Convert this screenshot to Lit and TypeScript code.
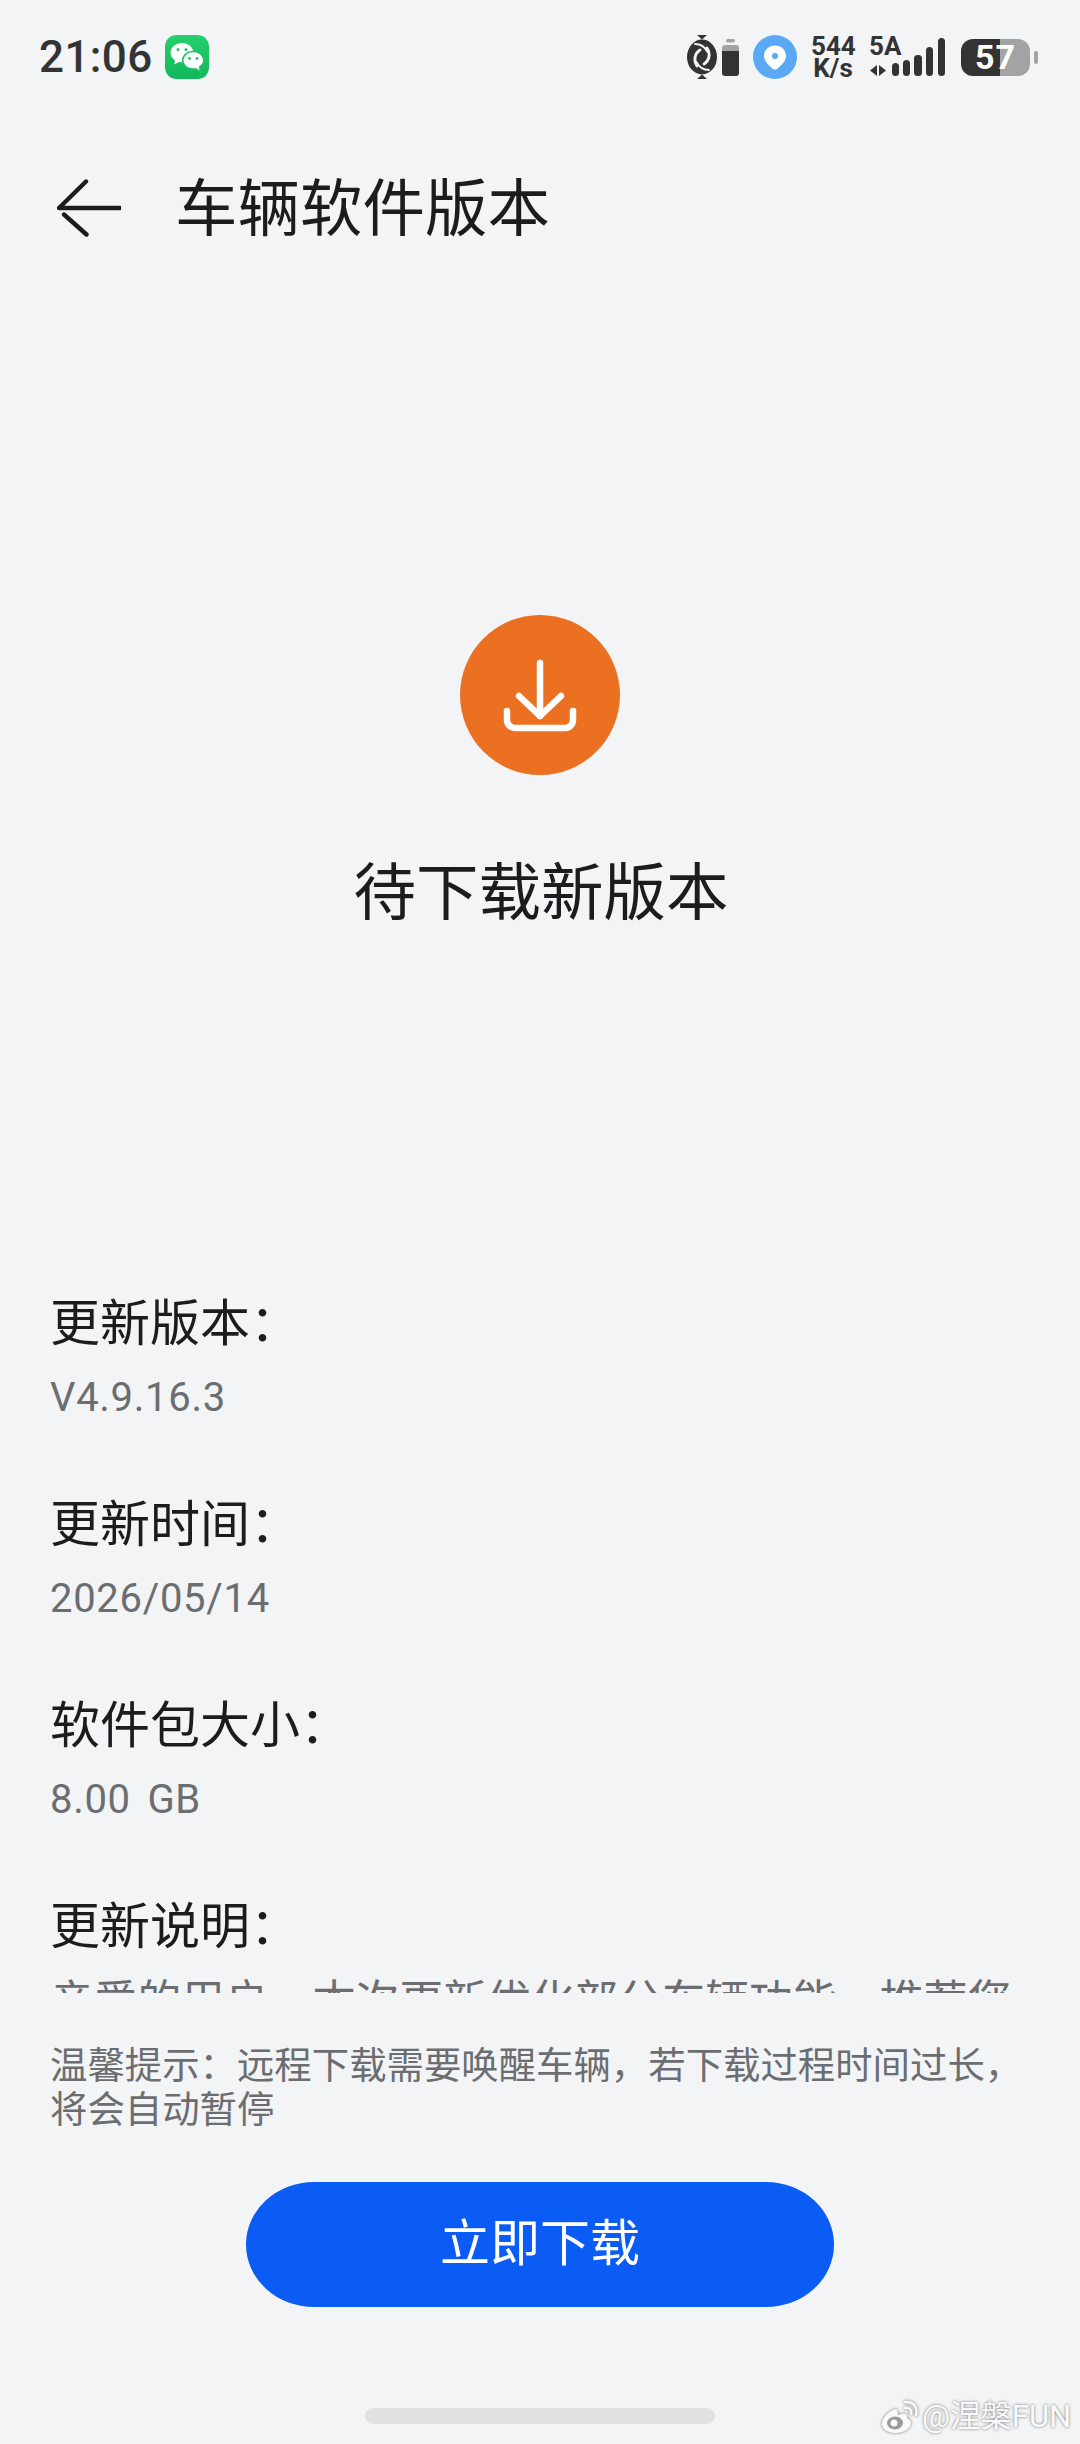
import { LitElement, html, css } from "lit";
import { customElement } from "lit/decorators.js";

const CJK = css`"Noto Sans CJK SC", "Noto Sans", sans-serif`;

@customElement("app-root")
export class AppRoot extends LitElement {
  static styles = css`
    :host {
      display: block;
      position: relative;
      width: 1080px;
      height: 2444px;
      overflow: hidden;
      background: #f2f4f6;
      font-family: Roboto, "Noto Sans CJK SC", sans-serif;
      color: #1c1c1e;
    }
    svg { display: block; flex: none; }

    .status {
      height: 114px;
      padding: 0 42px 0 39px;
      box-sizing: border-box;
      display: flex;
      align-items: center;
    }
    .time {
      width: 117px;
      font-size: 44px;
      line-height: 50px;
      font-weight: 500;
      letter-spacing: 0.4px;
      color: #333;
      margin-right: 9px;
    }
    .wechat { border-radius: 11px; }
    .spacer { flex: 1; }
    .link { margin-right: 5px; }
    .cell { margin-right: 14px; }
    .pin { margin-right: 14px; }
    .speed {
      width: 44px;
      margin-right: 13px;
      font-size: 26px;
      line-height: 22px;
      font-weight: 700;
      color: #333;
      text-align: center;
      white-space: nowrap;
    }
    .signal {
      position: relative;
      width: 78px;
      height: 42px;
      margin-right: 15px;
    }
    .signal span {
      position: absolute;
      left: 1px;
      top: -1px;
      font-size: 26px;
      line-height: 22px;
      font-weight: 700;
      color: #333;
    }
    .battery {
      width: 69px;
      height: 37px;
      border-radius: 12px;
      background: linear-gradient(90deg, #333 57%, #a3a3a3 57%);
      color: #fff;
      font-size: 34px;
      font-weight: 700;
      line-height: 37px;
      text-align: center;
      letter-spacing: 1px;
    }
    .nub {
      width: 4px;
      height: 13px;
      margin-left: 4px;
      border-radius: 2px;
      background: #a3a3a3;
    }

    .header {
      height: 188px;
      padding-left: 57px;
      box-sizing: border-box;
      display: flex;
      align-items: center;
    }
    .title {
      margin: 0 0 8px 54px;
      font-family: ${CJK};
      font-size: 62.5px;
      line-height: 80px;
      font-weight: 400;
      color: #1c1c1e;
      white-space: nowrap;
    }

    .content {
      height: 1691px;
      overflow: hidden;
      padding: 313px 50px 0;
      box-sizing: border-box;
    }
    .hero {
      display: flex;
      flex-direction: column;
      align-items: center;
    }
    .badge {
      width: 160px;
      height: 160px;
      border-radius: 50%;
      background: #ec7022;
    }
    .heading {
      margin: 63px 0 0 2px;
      font-family: ${CJK};
      font-size: 62.5px;
      line-height: 100px;
      white-space: nowrap;
    }
    .info { margin-top: 346px; }
    .row { height: 201px; }
    .label {
      font-family: ${CJK};
      font-size: 50px;
      line-height: 70px;
      color: #1c1c1e;
    }
    .value {
      margin-top: 14px;
      font-size: 40px;
      line-height: 60px;
      letter-spacing: 0.7px;
      word-spacing: 6px;
      color: #6b6d70;
    }
    .desc {
      margin-top: 9px;
      font-family: ${CJK};
      font-size: 43.7px;
      line-height: 62px;
      color: #6b6d70;
      white-space: nowrap;
    }

    .tip {
      margin-top: 48px;
      padding: 0 50px;
      font-family: ${CJK};
      font-size: 37.4px;
      line-height: 44px;
      color: #6b6d70;
    }
    .btn {
      display: block;
      width: 588px;
      height: 125px;
      margin: 53px 0 0 246px;
      padding: 0 0 10px;
      border: none;
      border-radius: 68px / 62.5px;
      background: #0b5cf5;
      color: #fff;
      font-family: ${CJK};
      font-size: 50px;
      line-height: 115px;
      text-align: center;
    }
    .home {
      width: 350px;
      height: 16px;
      margin: 101px 0 0 365px;
      border-radius: 8px;
      background: #e0e1e3;
    }
    .mark {
      position: absolute;
      left: 881px;
      top: 2399px;
      display: flex;
      align-items: center;
      gap: 3px;
      color: #fafafa;
      font-size: 31px;
      line-height: 36px;
      white-space: nowrap;
      text-shadow: 0 0 3px rgba(0, 0, 0, 0.55);
    }
    .mark svg { filter: drop-shadow(0 0 1.5px rgba(0, 0, 0, 0.55)); }
  `;

  render() {
    return html`
      <div class="status">
        <div class="time">21:06</div>
        <svg class="wechat" width="44" height="44" viewBox="0 0 44 44">
          <defs>
            <linearGradient id="wg" x1="0" y1="0" x2="0" y2="1">
              <stop offset="0" stop-color="#26cf6b" />
              <stop offset="1" stop-color="#12b75a" />
            </linearGradient>
          </defs>
          <rect width="44" height="44" rx="11" fill="url(#wg)" />
          <path fill="#fff" d="M17 8c-6.300 0-11.400 4.300-11.400 9.700 0 3.100 1.700 5.800 4.300 7.600l-.5 4.300 4.400-2.700c1.100.3 2.300.4 3.200.4 6.300 0 11.400-4.200 11.400-9.600S23.300 8 17 8z" />
          <path fill="#fff" stroke="#1cc465" stroke-width="1.600" d="M28 16.500c-5.700 0-10.300 3.900-10.300 8.800s4.600 8.800 10.300 8.800c.9 0 1.800-.1 2.700-.3l4.900 3.200-.8-5.200c2.500-1.600 4.100-3.800 4.100-6.500 0-4.900-4.600-8.800-10.300-8.800z" />
          <circle cx="13" cy="14.500" r="1.500" fill="#1fc566" />
          <circle cx="21" cy="14.500" r="1.500" fill="#1fc566" />
          <circle cx="24.500" cy="23.500" r="1.400" fill="#1fc566" />
          <circle cx="32" cy="23.500" r="1.400" fill="#1fc566" />
        </svg>
        <div class="spacer"></div>
        <svg class="link" width="30" height="44" viewBox="0 0 30 44">
          <path fill="#333" d="M10 0h10l-5 4.500zM10 44h10l-5-4.500z" />
          <ellipse cx="15" cy="22" rx="15" ry="17.500" fill="#333" />
          <g fill="none" stroke="#f2f4f6" stroke-linecap="round">
            <path d="M13 15C8 18 6 25 10 31" stroke-width="2.800" />
            <path d="M17 29C22 26 24 19 20 13" stroke-width="2.800" />
            <path d="M8 9C13 9 18 12 20.500 17" stroke-width="1.800" />
            <path d="M22 35C17 35 12 32 9.500 27" stroke-width="1.800" />
          </g>
        </svg>
        <svg class="cell" width="17" height="37" viewBox="0 0 17 37">
          <rect x="4" y="0" width="9" height="3.500" rx="1.700" fill="#a3a3a3" />
          <path d="M0 9a3 3 0 0 1 3-3h11a3 3 0 0 1 3 3v3H0z" fill="#a3a3a3" />
          <path d="M0 12h17v22a3 3 0 0 1-3 3H3a3 3 0 0 1-3-3z" fill="#333" />
        </svg>
        <svg class="pin" width="44" height="44" viewBox="0 0 44 44">
          <circle cx="22" cy="22" r="22" fill="#5aa9f5" />
          <path fill="#fff" d="M22 10.500c-6.200 0-11 4.600-11 10.500 0 5 5 9.800 9 13a3.200 3.200 0 0 0 4 0c4-3.200 9-8 9-13 0-5.900-4.800-10.500-11-10.500z" />
          <circle cx="22" cy="21" r="3" fill="#5aa9f5" />
        </svg>
        <div class="speed">544<br />K/s</div>
        <div class="signal">
          <span>5A</span>
          <svg width="78" height="42" viewBox="0 0 78 42">
            <path fill="#333" d="M9 29v11L2 34.500zM11 29l7 5.500-7 5.500z" />
            <rect x="24" y="27" width="7" height="13" rx="3.500" fill="#333" />
            <rect x="35" y="24" width="7" height="16" rx="3.500" fill="#333" />
            <rect x="46" y="19" width="8" height="21" rx="3.500" fill="#333" />
            <rect x="58" y="11" width="7" height="29" rx="3.500" fill="#333" />
            <rect x="70" y="2" width="7" height="38" rx="3.500" fill="#333" />
          </svg>
        </div>
        <div class="battery">57</div>
        <div class="nub"></div>
      </div>

      <div class="header">
        <svg width="64" height="58" viewBox="0 0 64 58">
          <g fill="none" stroke="#1c1c1e" stroke-width="4.400" stroke-linecap="round" stroke-linejoin="round">
            <path d="M29 2.500L2 29h61" />
            <path d="M7 35.500L29.500 55.500" />
          </g>
        </svg>
        <div class="title">车辆软件版本</div>
      </div>

      <div class="content">
        <div class="hero">
          <svg class="badge" viewBox="0 0 160 160">
            <g fill="none" stroke="#fff" stroke-width="6.500" stroke-linecap="round" stroke-linejoin="round">
              <path d="M80 48v53" />
              <path d="M59 81l21 20 21-20" />
              <path d="M47 96v9a8 8 0 0 0 8 8h50a8 8 0 0 0 8-8v-9" />
            </g>
          </svg>
          <div class="heading">待下载新版本</div>
        </div>
        <div class="info">
          <div class="row"><div class="label">更新版本：</div><div class="value">V4.9.16.3</div></div>
          <div class="row"><div class="label">更新时间：</div><div class="value">2026/05/14</div></div>
          <div class="row"><div class="label">软件包大小：</div><div class="value">8.00 GB</div></div>
          <div class="label">更新说明：</div>
          <div class="desc">亲爱的用户，本次更新优化部分车辆功能，推荐您</div>
        </div>
      </div>

      <div class="tip">温馨提示：远程下载需要唤醒车辆，若下载过程时间过长，将会自动暂停</div>
      <button class="btn">立即下载</button>
      <div class="home"></div>

      <div class="mark">
        <svg width="38" height="34" viewBox="0 0 38 34">
          <path fill="#fafafa" d="M15 9c-6 1-14 8-14 15 0 5 6 9 13 9 9 0 16-5 16-10 0-3-3-4-4-5 1-3-1-5-6-4l-3 1c0-3-1-6-2-6z" />
          <ellipse cx="14" cy="23" rx="8" ry="6.500" fill="#9a9a9a" />
          <circle cx="13" cy="23" r="3.500" fill="#fafafa" />
          <path fill="none" stroke="#fafafa" stroke-width="2.500" stroke-linecap="round" d="M24 8c4-1 7 2 6 6M24 2c8-1 13 5 11 13" />
        </svg>
        <span>@涅槃FUN</span>
      </div>
    `;
  }
}
